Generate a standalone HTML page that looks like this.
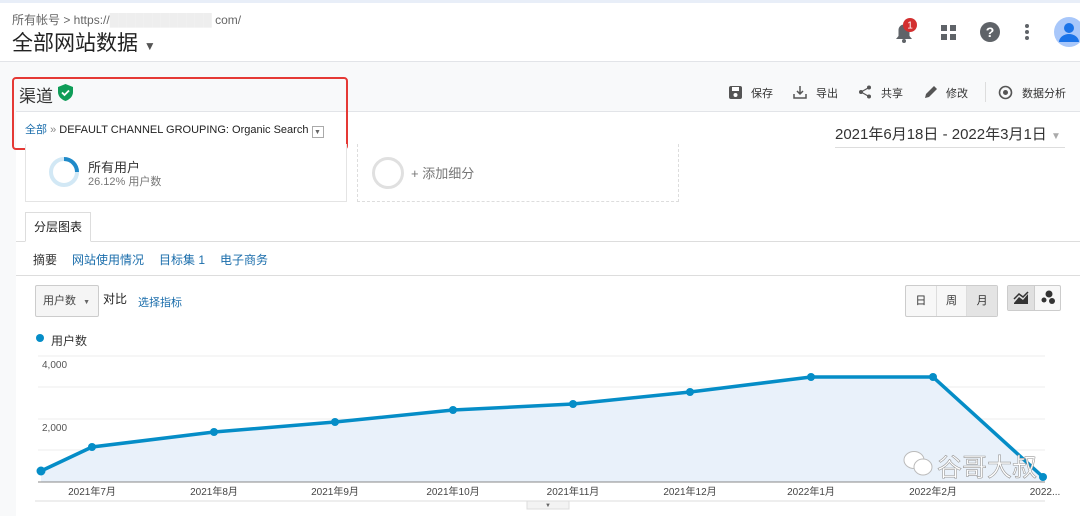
<!DOCTYPE html>
<html><head><meta charset="utf-8"><style>
*{margin:0;padding:0;box-sizing:border-box}
body{width:1080px;height:516px;overflow:hidden;background:#f8f9fa;font-family:"Liberation Sans","Noto Sans CJK SC",sans-serif;color:#333;position:relative}
.a{position:absolute}
.blue{color:#1a6dab}
.tb{position:absolute;top:85px;font-size:11px;color:#333;white-space:nowrap}
</style></head><body>
<div class="a" style="left:0;top:0;width:1080px;height:3px;background:#e8eef8"></div>
<div class="a" style="left:0;top:3px;width:1080px;height:59px;background:#fff;border-bottom:1px solid #e2e4e8"></div>
<div class="a" style="left:12px;top:11px;font-size:12px;color:#666">所有帐号 &gt; https://<span style="color:#eee">████████████</span> com/</div>
<div class="a" style="left:12px;top:27px;font-size:21px;color:#222">全部网站数据 <span style="font-size:12px;color:#555">▼</span></div>
<svg class="a" style="left:893px;top:17px" width="26" height="28" viewBox="0 0 26 28"><path d="M3 22h16l-2.5-3v-6a5.5 5.5 0 0 0-11 0v6z" fill="#5f6368"/><circle cx="11" cy="24" r="2" fill="#5f6368"/><circle cx="17" cy="8" r="7" fill="#d32f2f"/><text x="17" y="11.5" font-size="10" fill="#fff" text-anchor="middle" font-family="Liberation Sans">1</text></svg>
<svg class="a" style="left:941px;top:25px" width="16" height="16"><rect x="0" y="0" width="6" height="6" fill="#5f6368"/><rect x="9" y="0" width="6" height="6" fill="#5f6368"/><rect x="0" y="9" width="6" height="6" fill="#5f6368"/><rect x="9" y="9" width="6" height="6" fill="#5f6368"/></svg>
<svg class="a" style="left:980px;top:22px" width="20" height="20"><circle cx="10" cy="10" r="10" fill="#5f6368"/><text x="10" y="15" font-size="14" font-weight="bold" fill="#fff" text-anchor="middle" font-family="Liberation Sans">?</text></svg>
<svg class="a" style="left:1024px;top:23px" width="6" height="18"><circle cx="3" cy="3" r="2" fill="#5f6368"/><circle cx="3" cy="9" r="2" fill="#5f6368"/><circle cx="3" cy="15" r="2" fill="#5f6368"/></svg>
<svg class="a" style="left:1054px;top:17px" width="28" height="30"><circle cx="15" cy="15" r="15" fill="#a8c7fa"/><circle cx="15" cy="11" r="5" fill="#1a73e8"/><path d="M5 25a10 8 0 0 1 20 0z" fill="#1a73e8"/></svg>
<div class="a" style="left:16px;top:111px;width:1064px;height:1px;background:#e2e4e8"></div>
<div class="a" style="left:19px;top:82px;font-size:17px;color:#333">渠道</div>
<svg class="a" style="left:58px;top:84px" width="15" height="17" viewBox="0 0 15 17"><path d="M7.5 0L15 3v5c0 4-3 7.5-7.5 9C3 15.5 0 12 0 8V3z" fill="#0f9d58"/><path d="M4 8.5l2.5 2.5 4.5-4.5" stroke="#fff" stroke-width="1.8" fill="none"/></svg>
<svg class="a" style="left:729px;top:86px" width="13" height="13"><rect x="0" y="0" width="13" height="13" rx="2" fill="#555"/><rect x="3" y="1" width="7" height="4" fill="#fff"/><circle cx="6.5" cy="9" r="2" fill="#fff"/></svg>
<div class="tb" style="left:751px">保存</div>
<svg class="a" style="left:793px;top:85px" width="14" height="14"><path d="M7 1v8M4 6l3 3 3-3M1 9v4h12V9" stroke="#555" stroke-width="1.5" fill="none"/></svg>
<div class="tb" style="left:816px">导出</div>
<svg class="a" style="left:858px;top:85px" width="14" height="14"><circle cx="11" cy="2.5" r="2" fill="#555"/><circle cx="3" cy="7" r="2" fill="#555"/><circle cx="11" cy="11.5" r="2" fill="#555"/><path d="M11 2.5L3 7l8 4.5" stroke="#555" stroke-width="1.2" fill="none"/></svg>
<div class="tb" style="left:881px">共享</div>
<svg class="a" style="left:924px;top:85px" width="14" height="14"><path d="M1 13l1-4 8-8 3 3-8 8z" fill="#555"/></svg>
<div class="tb" style="left:946px">修改</div>
<div class="a" style="left:985px;top:82px;width:1px;height:20px;background:#ddd"></div>
<svg class="a" style="left:998px;top:85px" width="15" height="15"><circle cx="7.5" cy="7.5" r="6" fill="none" stroke="#555" stroke-width="1.6"/><circle cx="7.5" cy="7.5" r="2.5" fill="#555"/></svg>
<div class="tb" style="left:1022px">数据分析</div>
<div class="a" style="left:16px;top:112px;width:1064px;height:404px;background:#fff"></div>
<div class="a" style="left:25px;top:121px;font-size:11px;color:#222"><span class="blue">全部</span> <span style="color:#888">»</span> DEFAULT CHANNEL GROUPING: Organic Search <span style="display:inline-block;width:12px;height:12px;border:1px solid #aaa;font-size:7px;text-align:center;line-height:11px;color:#666;vertical-align:-1px">▼</span></div>
<div class="a" style="left:12px;top:77px;width:336px;height:73px;border:2px solid #e53935;border-radius:4px"></div>
<div class="a" style="left:835px;top:123px;width:230px;font-size:15px;color:#333;border-bottom:1px solid #ddd;padding-bottom:3px">2021年6月18日 - 2022年3月1日 <span style="font-size:10px;color:#aaa">▼</span></div>
<div class="a" style="left:25px;top:144px;width:322px;height:58px;border:1px solid #e4e4e4;border-top:none;background:#fff"></div>
<svg class="a" style="left:48px;top:156px" width="32" height="32"><circle cx="16" cy="16" r="13" fill="none" stroke="#d2e8f5" stroke-width="4"/><path d="M16 3a13 13 0 0 1 13 13" fill="none" stroke="#1f8ac9" stroke-width="4"/></svg>
<div class="a" style="left:88px;top:157px;font-size:13px;color:#333">所有用户</div>
<div class="a" style="left:88px;top:173px;font-size:11px;color:#777">26.12% 用户数</div>
<div class="a" style="left:357px;top:144px;width:322px;height:58px;border:1px dashed #ddd;border-top:none"></div>
<div class="a" style="left:372px;top:157px;width:32px;height:32px;border:3px solid #e0e0e0;border-radius:50%"></div>
<div class="a" style="left:411px;top:163px;font-size:13px;color:#777">+ 添加细分</div>
<div class="a" style="left:16px;top:241px;width:1064px;height:1px;background:#ddd"></div>
<div class="a" style="left:25px;top:212px;width:66px;height:30px;border:1px solid #ddd;border-bottom:1px solid #fff;background:#fff;font-size:12px;text-align:center;line-height:28px;color:#222">分层图表</div>
<div class="a" style="left:33px;top:251px;font-size:12px;color:#333">摘要<span class="blue" style="margin-left:15px">网站使用情况</span><span class="blue" style="margin-left:15px">目标集 1</span><span class="blue" style="margin-left:15px">电子商务</span></div>
<div class="a" style="left:16px;top:275px;width:1064px;height:1px;background:#ddd"></div>
<div class="a" style="left:35px;top:285px;width:64px;height:32px;border:1px solid #ccc;border-radius:2px;background:#f5f5f5;font-size:11px;line-height:30px;padding-left:7px;color:#444">用户数 <span style="font-size:7px;color:#666;margin-left:4px">▼</span></div>
<div class="a" style="left:103px;top:290px;font-size:12px;color:#222">对比</div>
<div class="a blue" style="left:138px;top:294px;font-size:11px">选择指标</div>
<div class="a" style="left:905px;top:285px;width:93px;height:32px;border:1px solid #ccc;border-radius:2px;display:flex;font-size:11px;background:#f7f7f7"><div style="flex:1;text-align:center;line-height:30px;border-right:1px solid #ddd">日</div><div style="flex:1;text-align:center;line-height:30px;border-right:1px solid #ddd">周</div><div style="flex:1;text-align:center;line-height:30px;background:#e4e4e4">月</div></div>
<div class="a" style="left:1007px;top:285px;width:54px;height:26px;border:1px solid #ccc;border-radius:2px;display:flex;background:#f7f7f7"><div style="flex:1;background:#e0e0e0;border-right:1px solid #ccc"><svg width="26" height="24"><path d="M6 17l5-6 4 3 5-6v10H6z" fill="#333"/><path d="M6 13l5-5 4 3 5-5" stroke="#333" stroke-width="1.5" fill="none"/></svg></div><div style="flex:1"><svg width="26" height="24"><circle cx="14" cy="8" r="3.5" fill="#333"/><circle cx="9" cy="14" r="2.5" fill="#333"/><circle cx="17" cy="15" r="3" fill="#333"/></svg></div></div>
<div class="a" style="left:36px;top:334px;width:8px;height:8px;border-radius:50%;background:#058dc7"></div>
<div class="a" style="left:51px;top:332px;font-size:12px;color:#333">用户数</div>
<svg class="a" style="left:0;top:340px" width="1080" height="176">
<g stroke="#eee" stroke-width="1"><line x1="38" y1="16" x2="1045" y2="16"/><line x1="38" y1="47" x2="1045" y2="47"/><line x1="38" y1="79" x2="1045" y2="79"/><line x1="38" y1="110" x2="1045" y2="110"/></g>
<text x="42" y="28" font-size="10" fill="#555" font-family="Liberation Sans">4,000</text>
<text x="42" y="91" font-size="10" fill="#555" font-family="Liberation Sans">2,000</text>
<path d="M41 131L92 107L214 92L335 82L453 70L573 64L690 52L811 37L933 37L1043 137L1043 142L41 142Z" fill="#e9f1fa"/>
<path d="M41 131L92 107L214 92L335 82L453 70L573 64L690 52L811 37L933 37L1043 137" fill="none" stroke="#058dc7" stroke-width="3.5"/>
<g fill="#058dc7"><circle cx="41" cy="131" r="4.5"/><circle cx="92" cy="107" r="4"/><circle cx="214" cy="92" r="4"/><circle cx="335" cy="82" r="4"/><circle cx="453" cy="70" r="4"/><circle cx="573" cy="64" r="4"/><circle cx="690" cy="52" r="4"/><circle cx="811" cy="37" r="4"/><circle cx="933" cy="37" r="4"/><circle cx="1043" cy="137" r="4"/></g>
<line x1="38" y1="142" x2="1045" y2="142" stroke="#888" stroke-width="1"/>
<line x1="35" y1="161" x2="1045" y2="161" stroke="#ddd" stroke-width="1"/>
<g font-size="10" fill="#444" font-family="Liberation Sans, Noto Sans CJK SC" text-anchor="middle"><text x="92" y="155">2021年7月</text><text x="214" y="155">2021年8月</text><text x="335" y="155">2021年9月</text><text x="453" y="155">2021年10月</text><text x="573" y="155">2021年11月</text><text x="690" y="155">2021年12月</text><text x="811" y="155">2022年1月</text><text x="933" y="155">2022年2月</text><text x="1045" y="155">2022...</text></g>
<rect x="527" y="161" width="42" height="8" fill="#f3f3f3" stroke="#ddd"/><text x="548" y="167" font-size="6" fill="#666" text-anchor="middle">▼</text>
<g fill="#fff" stroke="#bbb" stroke-width="1"><ellipse cx="914" cy="120" rx="10" ry="8.5"/><ellipse cx="923" cy="127" rx="9" ry="8"/></g>
<text x="937" y="136" font-size="25" fill="#fff" stroke="#999" stroke-width="0.6" font-family="Noto Sans CJK SC">谷哥大叔</text>
</svg>
</body></html>
